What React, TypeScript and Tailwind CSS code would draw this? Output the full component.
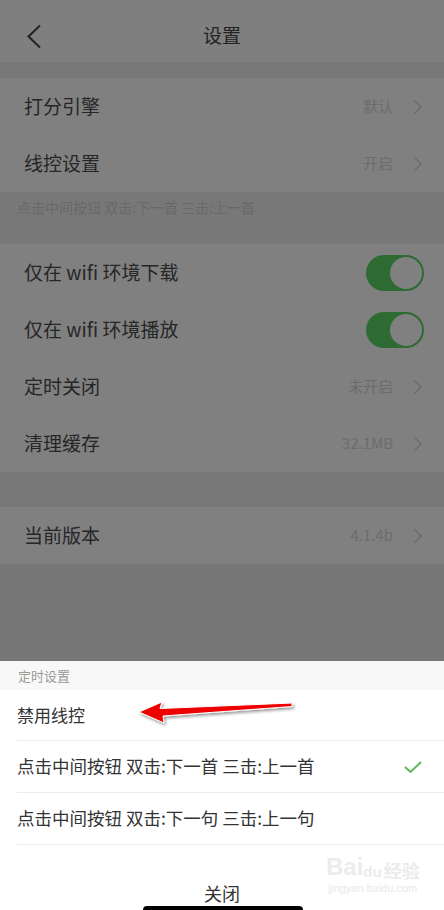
import React from "react";

const font = { fontFamily: '"Noto Sans CJK SC", "Noto Sans", sans-serif' };

function Chevron() {
  return (
    <svg width="10" height="16" viewBox="0 0 10 16" className="ml-[20px]">
      <path d="M1.5 1.5 L8 8 L1.5 14.5" fill="none" stroke="#6a6a6a" strokeWidth="1.4" />
    </svg>
  );
}

function Row({ label, value }: { label: string; value?: string }) {
  return (
    <div className="flex h-[57px] items-center bg-[#808080] pl-[24px] pr-[21px]">
      <span className="flex-1 text-[19px] text-[#262626]">{label}</span>
      {value && <span className="text-[15px] text-[#6c6c6c]">{value}</span>}
      <Chevron />
    </div>
  );
}

function ToggleRow({ label }: { label: string }) {
  return (
    <div className="flex h-[57px] items-center bg-[#808080] pl-[24px] pr-[20px]">
      <span className="flex-1 text-[19px] text-[#262626]">{label}</span>
      <div className="flex h-[36px] w-[58px] items-center justify-end rounded-full bg-[#2e6b33] pr-[2px]">
        <div className="h-[32px] w-[32px] rounded-full bg-[#808080]" />
      </div>
    </div>
  );
}

export default function App() {
  return (
    <div className="relative h-[910px] w-[444px] overflow-hidden bg-[#787878]" style={font}>
      {/* header */}
      <div className="relative flex h-[62px] items-center justify-center bg-[#7f7f7f] pt-[8px]">
        <svg width="16" height="26" viewBox="0 0 16 26" className="absolute left-[26px] top-[24px]">
          <path d="M14 1.5 L2.5 12.5 L14 23.5" fill="none" stroke="#222" strokeWidth="2" />
        </svg>
        <span className="text-[19px] text-[#222]">设置</span>
      </div>
      <div className="h-[16px] bg-[#787878]" />
      <Row label="打分引擎" value="默认" />
      <Row label="线控设置" value="开启" />
      <div className="h-[52px] bg-[#787878] pl-[17px] pt-[5px] text-[14px] text-[#686868]">
        点击中间按钮 双击:下一首 三击:上一首
      </div>
      <ToggleRow label="仅在 wifi 环境下载" />
      <ToggleRow label="仅在 wifi 环境播放" />
      <Row label="定时关闭" value="未开启" />
      <Row label="清理缓存" value="32.1MB" />
      <div className="h-[35px] bg-[#787878]" />
      <Row label="当前版本" value="4.1.4b" />
      <div className="h-[97px] bg-[#777777]" />

      {/* bottom sheet */}
      <div className="bg-white">
        <div className="flex h-[29px] items-center bg-[#f8f8f8] pl-[18px] text-[13px] text-[#9a9a9a]">定时设置</div>
        <div className="pl-[17px]">
          <div className="flex h-[51px] items-center border-b border-[#ececec] text-[17px] text-[#333]">禁用线控</div>
          <div className="flex h-[52px] items-center border-b border-[#ececec] pr-[21px] text-[17.5px] text-[#333]">
            <span className="flex-1">点击中间按钮 双击:下一首 三击:上一首</span>
            <svg width="20" height="16" viewBox="0 0 20 16">
              <path d="M2 8 L7.5 13 L18 3" fill="none" stroke="#5cb85c" strokeWidth="2" />
            </svg>
          </div>
          <div className="flex h-[52px] items-center border-b border-[#ececec] text-[17.5px] text-[#333]">
            点击中间按钮 双击:下一句 三击:上一句
          </div>
        </div>
        <div className="flex h-[67px] items-end justify-center pb-[5px] text-[18px] text-[#333]">关闭</div>
      </div>

      {/* home indicator */}
      <div className="absolute bottom-[-4px] left-[143px] h-[8px] w-[160px] rounded-full bg-black" />

      {/* red arrow annotation */}
      <svg className="absolute left-0 top-0" width="444" height="910" viewBox="0 0 444 910">
        <defs>
          <filter id="sh" x="-20%" y="-50%" width="140%" height="200%">
            <feDropShadow dx="1.5" dy="2" stdDeviation="1.5" floodColor="#000" floodOpacity="0.4" />
          </filter>
        </defs>
        <polygon
          points="139,712 162,702 160,708.5 292,703 292,706.5 163,716 164,723"
          fill="#ee0000"
          stroke="#fff"
          strokeWidth="1"
          strokeLinejoin="round"
          filter="url(#sh)"
        />
      </svg>

      {/* watermark */}
      <div className="absolute left-[326px] top-[855px] flex flex-col items-center leading-none" style={{ fontFamily: '"Liberation Sans", sans-serif' }}>
        <div className="flex items-end text-[24px] font-bold text-[#ececec]">
          <span>Bai</span>
          <span className="text-[15px]">du</span>
          <span className="ml-[2px] text-[18px]" style={font}>经验</span>
        </div>
        <span className="mt-[4px] text-[11px] text-[#e8e8e8]">jingyan.baidu.com</span>
      </div>
    </div>
  );
}
